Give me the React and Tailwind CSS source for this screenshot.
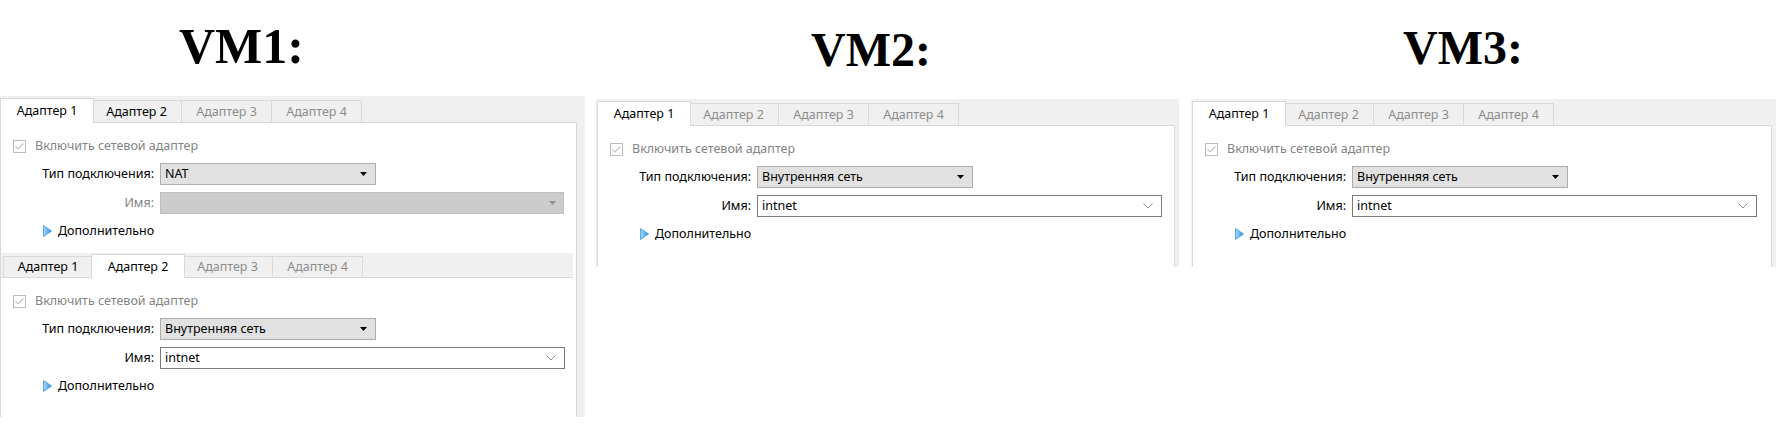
const TABS = ['Адаптер 1', 'Адаптер 2', 'Адаптер 3', 'Адаптер 4'];

function CheckBox() {
  return (
    <svg width="13" height="13" viewBox="0 0 13 13" className="shrink-0">
      <rect x="0.5" y="0.5" width="12" height="12" fill="#ffffff" stroke="#bcbcbc" />
      <polyline points="2.5,6.5 5,9 10.5,3.5" fill="none" stroke="#c4c4c4" strokeWidth="1.2" />
    </svg>
  );
}

function DownTri({ color = '#000000' }) {
  return (
    <svg width="7" height="4" viewBox="0 0 7 4" className="shrink-0">
      <polygon points="0,0 7,0 3.5,4" fill={color} />
    </svg>
  );
}

function Chevron() {
  return (
    <svg width="10" height="6" viewBox="0 0 10 6" className="shrink-0">
      <polyline points="0.5,0.5 5,5 9.5,0.5" fill="none" stroke="#8a8a8a" strokeWidth="1" />
    </svg>
  );
}

function Expander() {
  return (
    <svg width="9" height="12" viewBox="0 0 9 12" className="shrink-0">
      <defs>
        <linearGradient id="exp" x1="0" y1="0" x2="1" y2="0">
          <stop offset="0" stopColor="#a9dcff" />
          <stop offset="1" stopColor="#2e8fe0" />
        </linearGradient>
      </defs>
      <polygon points="0.5,0.5 8.5,6 0.5,11.5" fill="url(#exp)" stroke="#3a95e0" strokeWidth="0.8" />
    </svg>
  );
}

function Tab({ label, active, enabled, first, activeH, inactiveH }) {
  if (active) {
    return (
      <div
        className="relative z-10 -mx-[2px] w-[94px] -mb-px bg-white border border-b-0 border-[#d9d9d9] flex items-center justify-center text-black"
        style={{ height: activeH + 1 }}
      >
        {label}
      </div>
    );
  }
  return (
    <div
      className={`w-[90px] bg-[#f0f0f0] border-t border-r border-[#d9d9d9] flex items-center justify-center ${first ? 'border-l' : ''} ${enabled ? 'text-black' : 'text-[#8c8c8c]'}`}
      style={{ height: inactiveH }}
    >
      {label}
    </div>
  );
}

function TabStrip({ active, enabled, stripH, activeH, inactiveH }) {
  return (
    <div className="flex items-end pl-[2px]" style={{ height: stripH }}>
      {TABS.map((t, i) => (
        <Tab
          key={t}
          label={t}
          active={i === active}
          enabled={enabled.includes(i)}
          first={i === 0}
          activeH={activeH}
          inactiveH={inactiveH}
        />
      ))}
    </div>
  );
}

function Rows({ nat }) {
  return (
    <div className="pt-[15px]">
      <div className="flex items-center h-[16px]">
        <div className="ml-[12px]">
          <CheckBox />
        </div>
        <span className="ml-[9px] text-[#838383]">Включить сетевой адаптер</span>
      </div>

      <div className="flex items-center mt-[9px] h-[22px]">
        <div className="w-[153px] text-right text-black">Тип подключения:</div>
        <div className="ml-[6px] w-[216px] h-[22px] bg-[#e1e1e1] border border-[#adadad] flex items-center justify-between pl-[4px] pr-[8px] text-black">
          <span>{nat ? 'NAT' : 'Внутренняя сеть'}</span>
          <DownTri />
        </div>
      </div>

      <div className="flex items-center mt-[7px] h-[22px]">
        <div className={`w-[153px] text-right ${nat ? 'text-[#838383]' : 'text-black'}`}>Имя:</div>
        {nat ? (
          <div className="ml-[6px] w-[404px] h-[22px] bg-[#cccccc] border border-[#bfbfbf] flex items-center justify-end pr-[7px]">
            <DownTri color="#8f8f8f" />
          </div>
        ) : (
          <div className="ml-[6px] w-[405px] h-[22px] bg-white border border-[#7a7a7a] flex items-center justify-between pl-[4px] pr-[8px] text-black">
            <span>intnet</span>
            <Chevron />
          </div>
        )}
      </div>

      <div className="flex items-center mt-[9px] h-[16px] pl-[42px]">
        <Expander />
        <span className="ml-[6px] text-black">Дополнительно</span>
      </div>
    </div>
  );
}

function Title({ text, pl, pt, h, big }) {
  return (
    <div style={{ height: h, paddingLeft: pl, paddingTop: pt }}>
      <span className={`font-['Liberation_Serif',serif] font-bold leading-none text-black ${big ? 'text-[50px]' : 'text-[48px]'}`}>
        {text}
      </span>
    </div>
  );
}

function SmallVM({ title, titlePl, titlePt, className }) {
  return (
    <div className={className}>
      <Title text={title} pl={titlePl} pt={titlePt} h={99} />
      <div className="bg-[#f0f0f0] pl-px pr-[4px] h-[168px] flex flex-col">
        <TabStrip active={0} enabled={[0]} stripH={26} activeH={24} inactiveH={22} />
        <div className="flex-1 bg-white border-l border-r border-t border-[#d9d9d9]">
          <Rows nat={false} />
        </div>
      </div>
    </div>
  );
}

export default function App() {
  return (
    <div className="w-[1776px] h-[428px] bg-white overflow-hidden flex items-start font-['Noto_Sans',sans-serif] text-[12.5px] leading-[16px]">
      {/* VM1 */}
      <div className="w-[585px] shrink-0">
        <Title text="VM1:" pl={179} pt={21} h={96} big />
        <div className="bg-[#f0f0f0] pr-[8px] h-[321px] flex flex-col">
          <TabStrip active={0} enabled={[0, 1]} stripH={26} activeH={24} inactiveH={22} />
          <div className="flex-1 bg-white border-l border-r border-t border-[#d9d9d9]">
            <div className="h-[130px]">
              <Rows nat={true} />
            </div>
            <div className="mr-[3px]">
              <div className="bg-[#f0f0f0]">
                <TabStrip active={1} enabled={[0, 1]} stripH={24} activeH={23} inactiveH={21} />
              </div>
              <div className="border-t border-[#d9d9d9]">
                <Rows nat={false} />
              </div>
            </div>
          </div>
        </div>
      </div>

      {/* VM2 */}
      <SmallVM title="VM2:" titlePl={215} titlePt={26} className="ml-[11px] w-[583px] shrink-0" />

      {/* VM3 */}
      <SmallVM title="VM3:" titlePl={212} titlePt={24} className="ml-[12px] w-[585px] shrink-0" />
    </div>
  );
}
